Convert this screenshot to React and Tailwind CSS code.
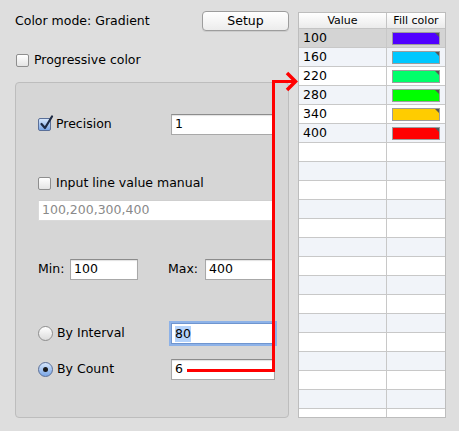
import { useState } from "react";

const font = { fontFamily: '"DejaVu Sans", "Lucida Grande", sans-serif' };

const rows = [
  { value: "100", color: "#5000ff" },
  { value: "160", color: "#00c8ff" },
  { value: "220", color: "#00ff6a" },
  { value: "280", color: "#00ff00" },
  { value: "340", color: "#ffcc00" },
  { value: "400", color: "#ff0000" },
];

function CheckBox({ checked }) {
  if (checked) {
    return (
      <div className="relative w-[13px] h-[13px] shrink-0 rounded-[2px] border border-[#5a6f98] bg-gradient-to-b from-[#d6e6fb] to-[#7aa6e6]">
        <svg className="absolute -top-[4px] left-[0px]" width="15" height="16" viewBox="0 0 15 16">
          <path d="M2.5 9 L6 13 L13 1.5" fill="none" stroke="#1d2a44" strokeWidth="2.2" strokeLinecap="round" strokeLinejoin="round" />
        </svg>
      </div>
    );
  }
  return <div className="w-[13px] h-[13px] shrink-0 rounded-[2px] border border-[#8e8e8e] bg-gradient-to-b from-white to-[#e4e4e4]" />;
}

function Radio({ checked }) {
  if (checked) {
    return (
      <div className="w-[15px] h-[15px] shrink-0 rounded-full border border-[#5a6f98] bg-gradient-to-b from-[#d6e6fb] to-[#7aa6e6] flex items-center justify-center">
        <div className="w-[5px] h-[5px] rounded-full bg-[#1a1a1a]" />
      </div>
    );
  }
  return <div className="w-[15px] h-[15px] shrink-0 rounded-full border border-[#8e8e8e] bg-gradient-to-b from-white to-[#dcdcdc]" />;
}

function Field({ value, className = "", gray }) {
  return (
    <div
      className={`h-[21px] bg-white border border-[#a8a8a8] border-t-[#8c8c8c] shadow-[inset_0_1px_1px_rgba(0,0,0,0.12)] flex items-center pl-[3px] text-[12.5px] ${gray ? "text-[#8a8a8a]" : "text-black"} ${className}`}
    >
      {value}
    </div>
  );
}

function App() {
  const [selected] = useState(0);
  const total = 21;

  return (
    <div style={font} className="relative w-[459px] h-[431px] bg-[#dedede] text-[12.5px] text-black overflow-hidden">
      <div className="flex">
        {/* left panel */}
        <div className="w-[298px] pl-[15px] pr-[9px] shrink-0">
          <div className="flex items-center justify-between h-[20px] mt-[11px]">
            <span>Color mode: Gradient</span>
            <div className="w-[87px] h-[20px] rounded-[4px] border border-[#9d9d9d] bg-gradient-to-b from-white to-[#ececec] shadow-[0_1px_0_rgba(0,0,0,0.08)] flex items-center justify-center">
              Setup
            </div>
          </div>
          <div className="flex items-center gap-[5px] mt-[22px] pl-[1px] h-[14px]">
            <CheckBox />
            <span>Progressive color</span>
          </div>
          <div className="mt-[15px] h-[336px] rounded-[4px] border border-[#bdbdbd] bg-[#d6d6d6] pl-[22px] pr-[13px]">
            <div className="grid grid-cols-[133px_1fr] items-center h-[21px] mt-[31px]">
              <div className="flex items-center gap-[5px]">
                <CheckBox checked />
                <span>Precision</span>
              </div>
              <Field value="1" />
            </div>
            <div className="flex items-center gap-[5px] h-[21px] mt-[38px]">
              <CheckBox />
              <span>Input line value manual</span>
            </div>
            <Field value="100,200,300,400" gray className="mt-[6px] border-[#dadada] border-t-[#cfcfcf] shadow-none" />
            <div className="flex items-center h-[21px] mt-[38px]">
              <span className="w-[32px]">Min:</span>
              <Field value="100" className="w-[68px]" />
              <span className="ml-[30px] w-[37px]">Max:</span>
              <Field value="400" className="flex-1" />
            </div>
            <div className="grid grid-cols-[133px_1fr] items-center h-[21px] mt-[43px]">
              <div className="flex items-center gap-[4px]">
                <Radio />
                <span>By Interval</span>
              </div>
              <div className="h-[21px] bg-white border border-[#6f95cf] shadow-[0_0_0_2px_#8db2e8] flex items-center pl-[3px]">
                <span className="bg-[#b5d3fb] leading-[16px]">80</span>
              </div>
            </div>
            <div className="grid grid-cols-[133px_1fr] items-center h-[21px] mt-[15px]">
              <div className="flex items-center gap-[4px]">
                <Radio checked />
                <span>By Count</span>
              </div>
              <Field value="6" />
            </div>
          </div>
        </div>

        {/* table */}
        <div className="mt-[12px] w-[148px] h-[406px] border border-[#bdbdbd] bg-white overflow-hidden">
          <div className="flex h-[16px] bg-gradient-to-b from-white to-[#ebebeb] border-b border-[#c4c4c4] text-[11px] leading-[15px]">
            <div className="w-[88px] text-center border-r border-[#c4c4c4]">Value</div>
            <div className="flex-1 text-center">Fill color</div>
          </div>
          {Array.from({ length: total }).map((_, i) => {
            const row = rows[i];
            const bg = i === selected ? "bg-[#d4d4d4]" : i % 2 === 1 ? "bg-[#f1f4f9]" : "bg-white";
            return (
              <div key={i} className={`flex h-[19px] border-b border-[#c8c8c8] ${bg}`}>
                <div className="w-[88px] border-r border-[#c8c8c8] pl-[4px] flex items-center text-[12.5px]">
                  {row ? row.value : ""}
                </div>
                <div className="flex-1 flex items-center pl-[5px]">
                  {row && (
                    <div
                      className="relative w-[48px] h-[13px] border border-[#9c9c9c]"
                      style={{ backgroundColor: row.color }}
                    >
                      <div className="absolute top-0 right-0 w-0 h-0 border-t-[4px] border-l-[4px] border-t-[#555] border-l-transparent" />
                    </div>
                  )}
                </div>
              </div>
            );
          })}
        </div>
      </div>

      {/* red connector arrow */}
      <svg className="absolute inset-0 pointer-events-none" width="459" height="431">
        <polyline points="187,370.5 273.5,370.5 273.5,81.5 294,81.5" fill="none" stroke="#ff0000" strokeWidth="3" />
        <polyline points="287,73 295.5,81.5 287,90" fill="none" stroke="#ff0000" strokeWidth="3.5" />
      </svg>
    </div>
  );
}

export default App;
